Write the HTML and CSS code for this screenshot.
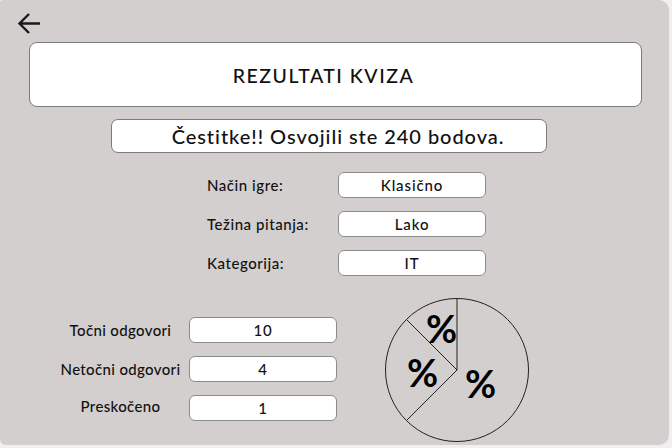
FILE: index.html
```html
<!DOCTYPE html>
<html lang="hr">
<head>
<meta charset="utf-8">
<title>Rezultati kviza</title>
<link rel="stylesheet" href="styles.css">
</head>
<body>
<div class="panel">
  <div class="back">
    <svg width="26" height="24" viewBox="0 0 26 24">
      <path d="M24 11.5 H3.5 M13 2 L3.5 11.5 L13 21" fill="none" stroke="#1a1a1a" stroke-width="2.4" stroke-linecap="butt" stroke-linejoin="miter"/>
    </svg>
  </div>
  <div class="title">REZULTATI KVIZA</div>
  <div class="congrats">Čestitke!! Osvojili ste 240 bodova.</div>
  <div class="info">
    <div class="info-label">Način igre:</div><div class="box">Klasično</div>
    <div class="info-label">Težina pitanja:</div><div class="box">Lako</div>
    <div class="info-label">Kategorija:</div><div class="box">IT</div>
  </div>
  <div class="bottom">
    <div class="stats">
      <div class="stat-label">Točni odgovori</div><div class="box">10</div>
      <div class="stat-label">Netočni odgovori</div><div class="box">4</div>
      <div class="stat-label up">Preskočeno</div><div class="box">1</div>
    </div>
    <svg class="pie" width="146" height="146" viewBox="0 0 146 146">
      <circle cx="73" cy="73" r="71.5" fill="none" stroke="#222" stroke-width="1"/>
      <path d="M73 1.5 V73 M73 73 L22.4 22.4 M73 73 L22.4 123.6" fill="none" stroke="#222" stroke-width="1"/>
      <text x="42" y="46" class="pct">%</text>
      <text x="23" y="90" class="pct">%</text>
      <text x="81" y="101" class="pct">%</text>
    </svg>
  </div>
</div>
</body>
</html>
```
FILE: styles.css
```css
html, body {
  margin: 0;
  padding: 0;
  background: #f1f0f0;
}
body {
  width: 672px;
  height: 448px;
  overflow: hidden;
  font-family: Lato, "Noto Sans", sans-serif;
  color: #111;
}
.panel {
  width: 669px;
  height: 445px;
  background: #d3cfce;
  border-radius: 3px 10px 10px 6px;
  box-sizing: border-box;
  padding-top: 12px;
  display: flex;
  flex-direction: column;
}
.back {
  margin-left: 16px;
  height: 24px;
  line-height: 0;
}
.title {
  margin-top: 6px;
  margin-left: 29px;
  width: 613px;
  height: 65px;
  box-sizing: border-box;
  background: #fff;
  border: 1px solid #7c7c7c;
  border-radius: 8px;
  display: flex;
  align-items: center;
  justify-content: center;
  font-size: 19.5px;
  font-weight: 500;
  letter-spacing: 1.5px;
  padding-top: 1px;
  padding-right: 24px;
}
.congrats {
  margin-top: 12px;
  margin-left: 111px;
  width: 436px;
  height: 34px;
  box-sizing: border-box;
  background: #fff;
  border: 1px solid #7c7c7c;
  border-radius: 7px;
  display: flex;
  align-items: center;
  justify-content: center;
  font-size: 20px;
  font-weight: 500;
  letter-spacing: 0.95px;
  padding-left: 18px;
}
.info {
  margin-top: 19px;
  margin-left: 207px;
  display: grid;
  grid-template-columns: 131px 148px;
  row-gap: 13px;
  align-items: center;
}
.info-label {
  font-size: 15px;
  font-weight: 500;
  letter-spacing: 0.55px;
}
.box {
  height: 26px;
  box-sizing: border-box;
  background: #fff;
  border: 1px solid #8c8c8c;
  border-radius: 6px;
  display: flex;
  align-items: center;
  justify-content: center;
  font-size: 15px;
  font-weight: 500;
  letter-spacing: 0.9px;
}
.bottom {
  margin-top: 21px;
  display: flex;
  align-items: flex-start;
}
.stats {
  margin-top: 20px;
  margin-left: 56px;
  display: grid;
  grid-template-columns: 129px 148px;
  column-gap: 4px;
  row-gap: 13px;
  align-items: center;
}
.stat-label {
  text-align: center;
  font-size: 15px;
  font-weight: 500;
  letter-spacing: 0.35px;
}
.stat-label.up {
  position: relative;
  top: -2px;
}
.pie {
  margin-left: 47px;
}
.pct {
  font-family: Lato, "Noto Sans", sans-serif;
  font-size: 38px;
  font-weight: 700;
  fill: #000;
}
```
